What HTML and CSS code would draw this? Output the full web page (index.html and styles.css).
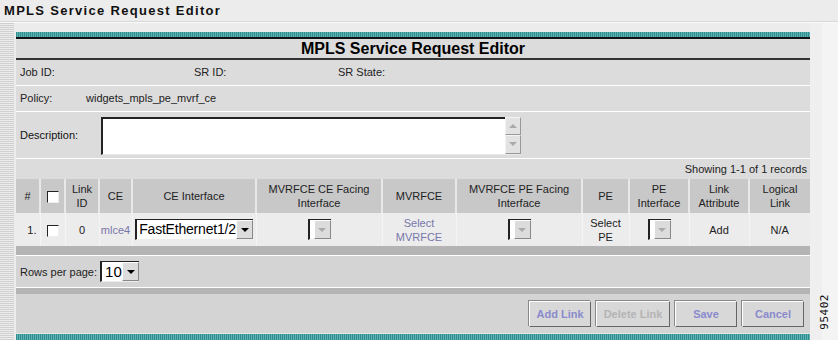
FILE: index.html
```html
<!DOCTYPE html>
<html lang="en">
  <head>
    <meta charset="utf-8" />
    <link rel="stylesheet" href="styles.css">
    <title>MPLS Service Request Editor</title>
  </head>
  <body>
    <div class="titlebar">MPLS Service Request Editor</div>
    <div class="main">
      <div class="strip"></div>
      <div class="panel">
        <div class="teal"></div>
        <div class="panel-head">MPLS Service Request Editor</div>
        <div class="info-row">
          <span class="f-job">Job ID:</span>
          <span class="f-sr">SR ID:</span>
          <span class="f-state">SR State:</span>
        </div>
        <div class="info-row">
          <span class="f-policy">Policy:</span>
          <span>widgets_mpls_pe_mvrf_ce</span>
        </div>
        <div class="desc-row">
          <span class="f-desc">Description:</span>
          <div class="textarea">
            <div class="scroll">
              <div class="sbtn"><span class="tri up"></span></div>
              <div class="sbtn"><span class="tri"></span></div>
            </div>
          </div>
        </div>
        <div class="showing">Showing 1-1 of 1 records</div>
        <table class="grid">
          <colgroup>
            <col style="width:24px" />
            <col style="width:25px" />
            <col style="width:34px" />
            <col style="width:33px" />
            <col style="width:124px" />
            <col style="width:126px" />
            <col style="width:74px" />
            <col style="width:126px" />
            <col style="width:47px" />
            <col style="width:60px" />
            <col style="width:60px" />
            <col style="width:61px" />
          </colgroup>
          <thead>
            <tr>
              <th>#</th>
              <th><span class="cb"></span></th>
              <th>Link<br />ID</th>
              <th>CE</th>
              <th>CE Interface</th>
              <th>MVRFCE CE Facing<br />Interface</th>
              <th>MVRFCE</th>
              <th>MVRFCE PE Facing<br />Interface</th>
              <th>PE</th>
              <th>PE<br />Interface</th>
              <th>Link<br />Attribute</th>
              <th>Logical<br />Link</th>
            </tr>
          </thead>
          <tbody>
            <tr>
              <td class="num">1.</td>
              <td><span class="cb"></span></td>
              <td>0</td>
              <td class="link">mlce4</td>
              <td>
                <span class="select wide"><span class="val">FastEthernet1/2</span><span class="arrow"><span class="tri dark"></span></span></span>
              </td>
              <td><span class="select off"><span class="val"></span><span class="arrow"><span class="tri"></span></span></span></td>
              <td class="link">Select<br />MVRFCE</td>
              <td><span class="select off"><span class="val"></span><span class="arrow"><span class="tri"></span></span></span></td>
              <td>Select<br />PE</td>
              <td><span class="select off"><span class="val"></span><span class="arrow"><span class="tri"></span></span></span></td>
              <td>Add</td>
              <td>N/A</td>
            </tr>
          </tbody>
        </table>
        <div class="bar"></div>
        <div class="rows-row">
          <span>Rows per page:</span>
          <span class="select small"><span class="val">10</span><span class="arrow"><span class="tri dark"></span></span></span>
        </div>
        <div class="bar thin"></div>
        <div class="btn-row">
          <span class="btn">Add Link</span>
          <span class="btn disabled">Delete Link</span>
          <span class="btn">Save</span>
          <span class="btn">Cancel</span>
        </div>
        <div class="teal bottom"></div>
      </div>
      <div class="side">
        <span class="figno">95402</span>
      </div>
    </div>
  </body>
</html>
```

FILE: styles.css
```css
body {
  margin: 0;
  background-color: #ececec;
  font-family: "Liberation Sans", Arial, sans-serif;
  font-size: 11px;
  color: #111;
  width: 838px;
  height: 340px;
  overflow: hidden;
}
.titlebar {
  height: 22px;
  line-height: 22px;
  padding-left: 4px;
  font-size: 13px;
  font-weight: bold;
  letter-spacing: 1.3px;
  color: #111;
  border-bottom: 1px solid #fafafa;
  box-shadow: 0 -1px 0 #d8d8d8 inset;
}
.main {
  display: flex;
  height: 317px;
}
.strip {
  width: 14px;
  background-color: #e8e8e8;
  background-image: repeating-linear-gradient(180deg, #c8c8c8 0 1px, #ececec 1px 2px);
  background-size: 14px 2px;
  opacity: 0.8;
}
.panel {
  width: 794px;
  margin-left: 2px;
  margin-top: 9px;
  display: flex;
  flex-direction: column;
  background-color: #d4d4d4;
}
.teal {
  height: 5px;
  flex-shrink: 0;
  background-image: repeating-linear-gradient(90deg, #2f8f8f 0 1px, #5fb0b0 1px 2px);
}
.teal.bottom {
  height: 6px;
  margin-top: 1px;
  border-top: 1px solid #e4e4e4;
}
.panel-head {
  height: 19px;
  line-height: 19px;
  border-top: 2px solid #111;
  border-bottom: 2px solid #333;
  background-color: #dcdcdc;
  text-align: center;
  font-size: 16px;
  font-weight: bold;
  color: #000;
}
.info-row {
  height: 25px;
  display: flex;
  align-items: center;
  background-color: #dcdcdc;
  border-bottom: 1px solid #fff;
  padding-left: 4px;
  color: #222;
}
.f-job {
  width: 174px;
}
.f-sr {
  width: 144px;
}
.f-policy {
  width: 66px;
}
.desc-row {
  height: 47px;
  display: flex;
  align-items: center;
  background-color: #dcdcdc;
  border-bottom: 1px solid #fff;
  padding-left: 4px;
}
.f-desc {
  width: 81px;
}
.textarea {
  width: 418px;
  height: 35px;
  background-color: #fff;
  border-top: 2px solid #222;
  border-left: 2px solid #222;
  border-bottom: 1px solid #e8e8e8;
  display: flex;
  justify-content: flex-end;
  margin-top: 1px;
}
.scroll {
  width: 16px;
  display: flex;
  flex-direction: column;
  margin-top: -2px;
  background-color: #dcdcdc;
}
.sbtn {
  flex: 1;
  border: 1px solid #f4f4f4;
  border-right-color: #999;
  border-bottom-color: #999;
  background-color: #e2e2e2;
  display: flex;
  align-items: center;
  justify-content: center;
}
.tri {
  width: 0;
  height: 0;
  border-left: 4px solid transparent;
  border-right: 4px solid transparent;
  border-top: 4px solid #aaa;
}
.tri.up {
  border-top: 0;
  border-bottom: 4px solid #aaa;
}
.tri.dark {
  border-top-color: #000;
}
.showing {
  height: 20px;
  line-height: 20px;
  text-align: right;
  padding-right: 3px;
  background-color: #dcdcdc;
  color: #222;
}
.grid {
  width: 794px;
  table-layout: fixed;
  border-collapse: collapse;
}
.grid th {
  height: 34px;
  padding: 0;
  background-color: #c8c8c8;
  border-left: 2px solid #e8e8e8;
  font-weight: normal;
  color: #222;
  line-height: 14px;
  text-align: center;
}
.grid th:first-child,
.grid td:first-child {
  border-left: 0;
}
.grid td {
  height: 33px;
  padding: 0;
  background-color: #ececec;
  border-left: 1px solid #f4f4f4;
  color: #222;
  line-height: 14px;
  text-align: center;
}
.grid td.num {
  text-align: right;
  padding-right: 3px;
}
.grid td.link {
  color: #7777aa;
}
.cb {
  display: inline-block;
  width: 10px;
  height: 10px;
  vertical-align: middle;
  background-color: #fff;
  border-top: 1px solid #222;
  border-left: 1px solid #222;
  border-right: 1px solid #eee;
  border-bottom: 1px solid #eee;
}
.select {
  display: inline-flex;
  align-items: stretch;
  vertical-align: middle;
  height: 19px;
  background-color: #fff;
  border-top: 1px solid #222;
  border-left: 2px solid #222;
  border-bottom: 1px solid #eee;
}
.select .val {
  padding-left: 2px;
  font-size: 14px;
  line-height: 19px;
  color: #000;
}
.select.wide {
  width: 116px;
}
.select.wide .val {
  flex: 1;
  letter-spacing: -0.2px;
}
.select.off {
  width: 21px;
  justify-content: flex-end;
}
.select.small {
  width: 37px;
  margin-left: 3px;
}
.select.small .val {
  flex: 1;
  padding-left: 3px;
  font-size: 15px;
}
.arrow {
  width: 15px;
  display: flex;
  align-items: center;
  justify-content: center;
  background-color: #dcdcdc;
  border: 1px solid #fff;
  border-right-color: #888;
  border-bottom-color: #888;
}
.bar {
  height: 9px;
  flex-shrink: 0;
  background-color: #b4b4b4;
  border-bottom: 1px solid #fff;
}
.bar.thin {
  height: 6px;
  border-bottom: 0;
  border-top: 1px solid #fff;
}
.rows-row {
  height: 31px;
  display: flex;
  align-items: center;
  padding-left: 4px;
  background-color: #d4d4d4;
  color: #222;
}
.btn-row {
  height: 38px;
  display: flex;
  justify-content: flex-end;
  align-items: center;
  gap: 5px;
  padding-right: 6px;
  background-color: #d4d4d4;
}
.btn {
  width: 60px;
  height: 24px;
  line-height: 24px;
  text-align: center;
  font-weight: bold;
  font-size: 11px;
  color: #8a8acc;
  background-color: #d8d8d8;
  border: 1px solid #fff;
  border-right-color: #666;
  border-bottom-color: #666;
  box-shadow: -1px -1px 0 #888;
  margin-top: 2px;
}
.btn.disabled {
  width: 72px;
  color: #b4b4b4;
}
.side {
  flex: 1;
  position: relative;
  border-left: 12px solid #efefef;
  background-color: #f4f4f4;
}
.figno {
  position: absolute;
  left: -4px;
  top: 271px;
  writing-mode: vertical-rl;
  transform: rotate(180deg);
  font-family: "DejaVu Sans Mono", "Liberation Mono", monospace;
  font-size: 11px;
  color: #111;
  letter-spacing: 0.5px;
}
```
